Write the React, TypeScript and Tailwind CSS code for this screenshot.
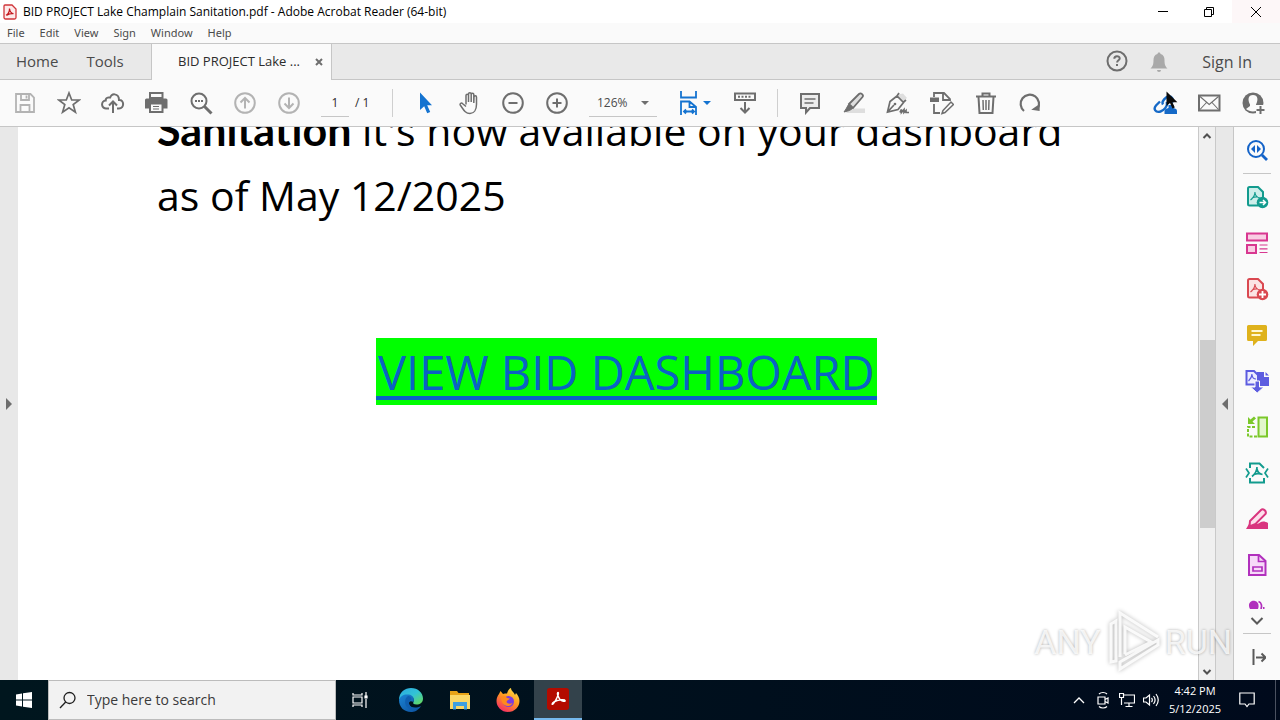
import type { ReactNode } from "react";

interface IconProps {
  children: ReactNode;
  className?: string;
}

const Icon = ({ children, className = "text-[#6e6e6e]" }: IconProps) => (
  <svg viewBox="0 0 24 24" className={`h-6 w-6 shrink-0 ${className}`} fill="none" stroke="currentColor" strokeWidth="2" aria-hidden="true">
    {children}
  </svg>
);

interface ToolButtonProps {
  label: string;
  children: ReactNode;
  className?: string;
}

const ToolButton = ({ label, children, className }: ToolButtonProps) => (
  <button type="button" aria-label={label} className="relative flex h-full w-11 shrink-0 items-center justify-center">
    <Icon className={className}>{children}</Icon>
  </button>
);

const Divider = () => <div className="mx-[10px] h-7 w-px shrink-0 bg-[#cfcfcf]" />;

const AcrobatSwirl = () => (
  <path d="M12 5c-1.600 0 .4 5.500 2.200 7.500 2 2.200 5.800 2.700 5.600 1.200-.4-1.700-8.300-.8-11.800 1.300-3.500 2-2.500 3.800-1.200 2.200C9.500 14.500 13.800 5 12 5z" strokeWidth="1.600" />
);

const PdfPage = ({ fill }: { fill: string }) => (
  <>
    <path d="M13 20.500H4.500a1.500 1.500 0 0 1-1.500-1.500V3.500A1.500 1.500 0 0 1 4.500 2H13l5 5v5" fill={fill} />
    <path d="M10 7c0 3-2 6-4.500 8M10 8c.5 3 2 4.500 5 5M7 13c2-1 4-1.200 6-1" strokeWidth="1.200" />
  </>
);

const menus = ["File", "Edit", "View", "Sign", "Window", "Help"];

const TitleBar = () => (
  <header className="flex h-[23px] shrink-0 items-center bg-white text-xs text-black">
    <svg viewBox="0 0 14 16" className="mr-[6px] ml-[3px] h-4 w-[14px]" fill="none" aria-hidden="true">
      <path d="M2 1h7l4 4v8.500a1.500 1.500 0 0 1-1.500 1.500h-9A1.500 1.500 0 0 1 1 13.500V2a1 1 0 0 1 1-1z" fill="#fdeaea" stroke="#d0353a" strokeWidth="1.300" />
      <path d="M6.500 4.500c0 3-1.500 5.500-3 6.500.5.800 1.500-1.800 7-1.300-1.500-.2-3.500-1.500-4-5.200z" stroke="#c3181e" strokeWidth="1.200" />
    </svg>
    <h1>BID PROJECT Lake Champlain Sanitation.pdf - Adobe Acrobat Reader (64-bit)</h1>
    <div className="ml-auto flex h-full">
      <button type="button" aria-label="Minimize" className="flex w-[46px] items-center justify-center">
        <svg viewBox="0 0 12 12" className="h-3 w-3" stroke="#000"><path d="M1 5.500h10" /></svg>
      </button>
      <button type="button" aria-label="Restore" className="flex w-[46px] items-center justify-center">
        <svg viewBox="0 0 12 12" className="h-3 w-3" stroke="#000" fill="none"><path d="M1.500 3.500h7v7h-7zM3.500 3.500v-2h7v7h-2" /></svg>
      </button>
      <button type="button" aria-label="Close" className="flex w-12 items-center justify-center bg-[#fdf7f8]">
        <svg viewBox="0 0 12 12" className="h-3 w-3" stroke="#000"><path d="M1 1l10 10M11 1L1 11" /></svg>
      </button>
    </div>
  </header>
);

const TabBar = () => (
  <div className="flex h-9 shrink-0 items-stretch border-b border-[#c6c6c6] bg-[#e9e9e9] text-[15px] text-[#4b4b4b]">
    <nav className="flex w-[151px] items-center gap-7 pl-4">
      <button type="button">Home</button>
      <button type="button">Tools</button>
    </nav>
    <div className="-mb-px flex w-[181px] items-center justify-between border-x border-[#c6c6c6] bg-[#fafafa] pr-2 pl-[26px] text-[13px] text-[#2c2c2c]">
      <span>BID PROJECT Lake ...</span>
      <button type="button" aria-label="Close tab">
        <svg viewBox="0 0 8 8" className="h-2 w-2" stroke="#6e6e6e" strokeWidth="2"><path d="M1 1l6 6M7 1L1 7" /></svg>
      </button>
    </div>
    <div className="ml-auto flex items-center pr-7">
      <button type="button" aria-label="Help" className="mr-[17px]">
        <Icon>
          <circle cx="11" cy="11" r="9.500" />
          <path d="M8.300 8.800c0-3.600 5.400-3.300 5.400-.4 0 1.900-2.600 1.900-2.600 4.100M11 14v2" />
        </Icon>
      </button>
      <button type="button" aria-label="Notifications" className="mr-[31px]">
        <Icon className="text-[#a9a9a9]">
          <path d="M12 2.500c1 0 1.500.6 1.500 1.500 3 .8 4 3 4 6 0 4.500.8 6.500 3 8.500h-17c2.200-2 3-4 3-8.500 0-3 1-5.200 4-6 0-.9.500-1.500 1.500-1.500zM10 20h4a2 2 0 0 1-4 0z" fill="currentColor" stroke="none" />
        </Icon>
      </button>
      <button type="button" className="text-base">Sign In</button>
    </div>
  </div>
);

const Toolbar = () => (
  <div className="flex h-[47px] shrink-0 items-center border-b border-[#c6c6c6] bg-[#fafafa] pr-[5px] pl-[3px] text-xs">
    <ToolButton label="Save" className="text-[#b3b3b3]">
      <path d="M3 3h14.500L21 6.500V21H3zM8 3v6h8V3M7.500 21v-7h9v7M13.500 4.500v3" strokeWidth="1.800" />
    </ToolButton>
    <ToolButton label="Add to favorites">
      <path d="M12 2l2.700 7h7.500l-6 4.600 2.200 7.600-6.400-4.500-6.400 4.500 2.200-7.600-6-4.600h7.500z" strokeWidth="1.700" />
    </ToolButton>
    <ToolButton label="Upload">
      <path d="M8 17.500H5.500a4 4 0 0 1-.8-8C4.500 6 9 6 9 7.500 9.500 1.500 18 2 18 9c5.500-.5 5.500 8.500 0 8.500h-2M12 22V10.500M8 14.500l4-4 4 4" />
    </ToolButton>
    <ToolButton label="Print">
      <path d="M5 2h12.500v5H5z" fill="#fafafa" />
      <path d="M1.500 7.500h19.500a1.500 1.500 0 0 1 1.500 1.500v8.500H0V9a1.500 1.500 0 0 1 1.500-1.500z" fill="currentColor" stroke="none" />
      <path d="M5 12.500h12.500V21H5z" fill="#fafafa" />
      <path d="M8 15.500h6M8 18h6" strokeWidth="1.200" />
    </ToolButton>
    <ToolButton label="Find">
      <circle cx="10" cy="10" r="7.500" />
      <path d="M15.500 15.500l7 7" strokeWidth="3" />
      <path d="M6 10h2M9 10h2M12 10h2" />
    </ToolButton>
    <ToolButton label="Previous page" className="text-[#b3b3b3]">
      <circle cx="12" cy="12" r="9.800" />
      <path d="M12 17.500V7M7.500 11.500L12 7l4.500 4.500" />
    </ToolButton>
    <ToolButton label="Next page" className="text-[#b3b3b3]">
      <circle cx="12" cy="12" r="9.800" />
      <path d="M12 6.500V17M7.500 12.500L12 17l4.500-4.500" />
    </ToolButton>
    <div className="ml-[10px] flex items-center gap-[6px] text-[#2c2c2c]">
      <input aria-label="Page number" defaultValue="1" className="h-7 w-7 border-b border-[#c6c6c6] text-center" />
      <span className="w-[17px] whitespace-nowrap">/ 1</span>
    </div>
    <div className="ml-[10px]"><Divider /></div>
    <ToolButton label="Select" className="text-[#1473d0]">
      <path d="M7 1.500v17.500l4.200-3.800 3 7 3-1.300-3-6.700H19z" fill="currentColor" stroke="none" />
    </ToolButton>
    <ToolButton label="Pan">
      <path d="M8 13.500V4.500c0-1.800 2.500-1.800 2.500 0V11V3c0-1.800 2.700-1.800 2.700 0v8-7.500c0-1.800 2.600-1.800 2.600 0V12l.2-6c.2-1.600 2.500-1.500 2.500.2v7c0 5.500-2.500 9.300-6.500 9.300-5 0-6.500-4-9.800-8.500-.8-1.500 1.200-2.600 2.500-1.300L8 15.500" strokeWidth="1.500" transform="translate(1 0)" />
    </ToolButton>
    <ToolButton label="Zoom out">
      <circle cx="12" cy="12" r="9.800" />
      <path d="M7.500 12h9" />
    </ToolButton>
    <ToolButton label="Zoom in">
      <circle cx="12" cy="12" r="9.800" />
      <path d="M7.500 12h9M12 7.500v9" />
    </ToolButton>
    <button type="button" aria-label="Zoom level" className="ml-[10px] flex h-7 w-[68px] shrink-0 items-center justify-between border-b border-[#c6c6c6] px-2 text-[#4b4b4b]">
      126%
      <svg viewBox="0 0 8 4" className="h-1 w-2" fill="#6e6e6e"><path d="M0 0h8L4 4z" /></svg>
    </button>
    <button type="button" aria-label="Fit width" className="ml-5 flex h-full w-[46px] shrink-0 items-center gap-[2px]">
      <Icon className="text-[#1473d0]">
        <path d="M4 0v6.500h15V0M4 24V10.500h8.500L19 16v8M12.500 10.500V16H19M7 20.500h10M9 18.500l-2 2 2 2M15 18.500l2 2-2 2" strokeWidth="1.800" />
      </Icon>
      <svg viewBox="0 0 8 4" className="h-1 w-2" fill="#1473d0"><path d="M0 0h8L4 4z" /></svg>
    </button>
    <ToolButton label="Show keyboard bar">
      <path d="M2 2.500h20v6.500H2z" />
      <path d="M5 5.800h2M8.500 5.800h2M12 5.800h2M15.500 5.800h2M12 11v10.500M7.500 17l4.500 4.500 4.500-4.500" />
    </ToolButton>
    <Divider />
    <ToolButton label="Comment">
      <path d="M3 3h18v14h-9l-4 4.500V17H3z" fill="#ececec" />
      <path d="M6.500 8h11M6.500 12h9" strokeWidth="1.300" />
    </ToolButton>
    <ToolButton label="Highlight">
      <path d="M8 17.500h15V22H4z" fill="#dedede" stroke="none" />
      <path d="M7 13L17 3c2-1.800 5 1 3.500 3L11 17z" fill="#dedede" strokeWidth="1.800" />
      <path d="M6.500 13.500l4 4-3 2L2 21l2-3z" fill="currentColor" strokeWidth="1" />
    </ToolButton>
    <ToolButton label="Sign">
      <path d="M12 3.500l5-1 4 4.500-5 4z" fill="#dedede" stroke="none" />
      <path d="M1.500 21L4 10.500l7-5.500 6.500 6.500-5.500 7zM1.500 21l6.500-7M11 5l2-3M17 11.500L20 9M14 21.500l1.500-3v3l2.500-3v3l2-2v2h3" strokeWidth="1.700" />
      <circle cx="9" cy="13" r="1.300" fill="currentColor" stroke="none" />
    </ToolButton>
    <ToolButton label="Edit PDF">
      <path d="M4 6V2h10l6 6v2M13 2v7h7M4 13v9h6" strokeWidth="1.800" />
      <path d="M0 6.500h9V11H0z" fill="currentColor" stroke="none" />
      <path d="M13 19.500L21 11l2.500 2.500-8.500 8-3 1z" strokeWidth="1.500" fill="#fafafa" />
    </ToolButton>
    <ToolButton label="Delete">
      <path d="M2 5.500h20M8.500 5V2.500h7V5M4.500 6l1 16h13l1-16" />
      <path d="M9 9l.3 10M12 9v10M15 9l-.3 10" strokeWidth="1.500" />
    </ToolButton>
    <ToolButton label="Rotate">
      <path d="M6 20A9.200 9.200 0 1 1 19.500 18" strokeWidth="2.200" />
      <path d="M13.500 19.500h8.500l-1-7z" fill="currentColor" stroke="none" transform="rotate(8 18 17)" />
    </ToolButton>
    <div className="ml-auto flex h-full">
      <button type="button" aria-label="Share link" className="relative flex w-11 items-center justify-center">
        <Icon className="text-[#1569c7]">
          <path d="M10 13.500c-2-3 3-8 6-8s5 3 3 6M13.500 11c2 4-3 8.500-6 9.500-5 1.500-7.500-2.500-4.500-6L7 10.500" strokeWidth="2.400" />
          <path d="M11.500 23v-3c0-2 2-2.500 4-3V14h5v3c2 .5 3.500 1 3.500 3v3z" fill="currentColor" stroke="none" />
        </Icon>
        {/* mouse pointer resting on the button */}
        <svg viewBox="0 0 12 18" className="absolute top-[11px] left-[23px] h-[18px] w-3" aria-hidden="true">
          <path d="M.5.500v14.500l3.500-3 2.500 5.500 2.300-1-2.400-5.300h5z" fill="#0b0b0b" />
        </svg>
      </button>
      <ToolButton label="Send by email">
        <path d="M2 4.500h20.500v15H2z" />
        <path d="M3 5.500l9.200 8 9.300-8M3 18.500l6.500-7M21.500 18.500l-6.500-7" strokeWidth="1.100" />
      </ToolButton>
      <ToolButton label="Share with others">
        <circle cx="12" cy="12" r="10.500" fill="currentColor" stroke="none" />
        <path d="M12 4c5 0 5.500 5 3 9.500v1.500l4.500 2.500C16 21 9 21.500 5 18l4-3v-1.500C6.500 9 7 4 12 4z" fill="#fafafa" stroke="none" />
        <path d="M15 14h9v9h-9z" fill="#fafafa" stroke="none" />
        <path d="M19.500 15v8M15.500 19h8" />
      </ToolButton>
    </div>
  </div>
);

const ScrollBar = () => (
  <div className="flex w-[18px] shrink-0 flex-col items-center border-x border-[#c9c9c9] bg-[#f0f0f0]" aria-hidden="true">
    <svg viewBox="0 0 16 17" className="h-[17px] w-4 shrink-0" fill="none" stroke="#505050" strokeWidth="2"><path d="M4.500 11L8 7.500l3.500 3.500" /></svg>
    <div className="grow-[196]" />
    <div className="w-[15px] grow-[188] bg-[#cdcdcd]" />
    <div className="grow-[135]" />
    <svg viewBox="0 0 16 17" className="h-[17px] w-4 shrink-0" fill="none" stroke="#505050" strokeWidth="2"><path d="M4.500 7L8 10.500 11.500 7" /></svg>
  </div>
);

const DocumentPage = () => (
  <main className="min-w-0 flex-1 overflow-hidden bg-white text-black">
    <p className="-mt-[30px] ml-[139px] text-[41px] leading-[65px] whitespace-nowrap">
      <strong className="font-[Lato,sans-serif] text-[43px]">Sanitation</strong> it's now available on your dashboard
      <br />
      as of May 12/2025
    </p>
    <div className="mt-[110px] ml-[358px] flex">
      <a href="#dashboard" className="h-[67px] bg-[#00ff00] px-[2px] text-[47px] leading-[68px] whitespace-nowrap text-[#0b62c4] shadow-[inset_0_-5px_0_#00ff00,inset_0_-9px_0_#0b62c4]">
        VIEW BID DASHBOARD
      </a>
    </div>
  </main>
);

const sideTools = [
  {
    label: "Export PDF",
    color: "text-[#129b8e]",
    icon: (
      <>
        <PdfPage fill="#cdeeea" />
        <circle cx="17.500" cy="17.500" r="5.800" fill="currentColor" stroke="none" />
        <path d="M14.500 17.500h6M18 15l2.500 2.500L18 20" stroke="#fff" strokeWidth="1.500" />
      </>
    ),
  },
  {
    label: "Organize pages",
    color: "text-[#d83790]",
    icon: (
      <>
        <path d="M2 2.500h20v7H2zM2 14h9v8H2z" fill="#f9cde3" />
        <path d="M14.500 14h8M14.500 17.800h8M14.500 21.500h8" strokeWidth="1.200" />
      </>
    ),
  },
  {
    label: "Create PDF",
    color: "text-[#da4850]",
    icon: (
      <>
        <PdfPage fill="#fbe3e3" />
        <circle cx="17.500" cy="17.500" r="5.800" fill="currentColor" stroke="none" />
        <path d="M14 17.500h7M17.500 14v7" stroke="#fff" strokeWidth="1.800" />
      </>
    ),
  },
  {
    label: "Comment",
    color: "text-[#dfb21c]",
    icon: (
      <>
        <path d="M3.500 2h17A1.500 1.500 0 0 1 22 3.500v13a1.500 1.500 0 0 1-1.500 1.500H13l-5 5v-5H3.500A1.500 1.500 0 0 1 2 16.500v-13A1.500 1.500 0 0 1 3.500 2z" fill="currentColor" stroke="none" />
        <path d="M6.500 8h11M6.500 12h9" stroke="#fff7d0" strokeWidth="1.800" />
      </>
    ),
  },
  {
    label: "Combine files",
    color: "text-[#5c5ce0]",
    icon: (
      <>
        <path d="M12 3h7v5h5v9H12zM20.500 3L24 6.500h-3.500z" fill="currentColor" stroke="none" />
        <path d="M1.500 2H9l4 4v9.500H1.500z" fill="#ededff" />
        <path d="M7 5c0 3-1.500 5-3.500 7M7 6c.5 3 2 4 4 4" strokeWidth="1.200" />
        <path d="M10 12h4.500v6H19L12.200 24 5.500 18H10z" fill="currentColor" stroke="#fafafa" strokeWidth="1" />
      </>
    ),
  },
  {
    label: "Compress pages",
    color: "text-[#7bc82a]",
    icon: (
      <>
        <path d="M13.500 2.500H22v19h-8.500z" fill="#e2f6cc" />
        <path d="M10 12H3v9.500h10" strokeDasharray="3 1.500" />
        <path d="M3 9V2l2.500 2.500L9 1.500l2 2-3.500 3L10 9z" fill="currentColor" stroke="none" />
      </>
    ),
  },
  {
    label: "Compress PDF",
    color: "text-[#129b8e]",
    icon: (
      <>
        <path d="M5 7V2.500h9.500L19 7M5 17v4.500h14V17" />
        <path d="M1 7.500L4 12l-3 4.500M23 7.500L20 12l3 4.500M12 6c0 4-2 7-5 9.500M12 8c.5 3 2.500 5 5.500 5.500M9 13.500c2-1 4-1.300 7-.5" strokeWidth="1.700" />
      </>
    ),
  },
  {
    label: "Redact",
    color: "text-[#d9367f]",
    icon: (
      <>
        <path d="M1 22l3-5c6-1 8 1 11-1.500 2-1.500 5-1.500 8 .5v6z" fill="currentColor" stroke="none" />
        <path d="M5 14L16 3c2-2 6 1 4.500 4L10.500 17l-6 2.500z" fill="#fde0ec" />
      </>
    ),
  },
  {
    label: "Prepare form",
    color: "text-[#b130bd]",
    icon: (
      <>
        <path d="M4 2h10l6.500 6v14H4z" fill="#f6d9f8" />
        <path d="M13.500 2v6.500h7M8 14h9v4H8z" strokeWidth="1.700" />
      </>
    ),
  },
];

const ToolRail = () => (
  <aside className="flex w-[47px] shrink-0 flex-col items-center overflow-hidden border-l border-[#c6c6c6] bg-[#fafafa]">
    <button type="button" aria-label="Search tools" className="flex h-[46px] shrink-0 items-center">
      <Icon className="text-[#1463c8]">
        <circle cx="11" cy="11" r="8" />
        <path d="M17 17l5 5" strokeWidth="2.800" />
        <path d="M10 7v8l-4-4zM12 7v8l4-4z" fill="currentColor" stroke="none" />
      </Icon>
    </button>
    <div className="h-px w-7 shrink-0 bg-[#c6c6c6]" />
    {sideTools.map((tool) => (
      <button key={tool.label} type="button" aria-label={tool.label} className="flex h-[46px] shrink-0 items-center">
        <Icon className={tool.color}>{tool.icon}</Icon>
      </button>
    ))}
    <div className="flex min-h-0 flex-1 items-end overflow-hidden">
      <svg viewBox="0 0 18 9" className="h-[9px] w-[18px]" fill="none" aria-hidden="true">
        <path d="M2 9C-1 4 3 0 7 1c3 .5 4.500 4 3 8z" fill="#b130bd" />
        <path d="M10.500 1.500c3 1 3.500 4.500 2.500 7.500" stroke="#b130bd" strokeWidth="1.800" />
        <path d="M15 8h1.500" stroke="#b130bd" strokeWidth="2" />
      </svg>
    </div>
    <button type="button" aria-label="More tools" className="flex h-6 shrink-0 items-center">
      <svg viewBox="0 0 14 8" className="h-2 w-[14px]" fill="none" stroke="#5a5a5a" strokeWidth="2"><path d="M1.500 1L7 6.500 12.500 1" /></svg>
    </button>
    <div className="h-px w-7 shrink-0 bg-[#c6c6c6]" />
    <button type="button" aria-label="Collapse tools pane" className="flex h-[46px] shrink-0 items-center">
      <svg viewBox="0 0 14 16" className="ml-1 h-4 w-[14px]" fill="none" stroke="#5a5a5a" strokeWidth="2"><path d="M1.500 0v16M4 8.500h9M9.500 4.500l4 4-4 4" /></svg>
    </button>
  </aside>
);

const Watermark = () => (
  <div className="pointer-events-none absolute right-12 bottom-[6px] flex items-center gap-[2px] font-[Roboto,sans-serif] text-[34px] leading-[64px] text-white/80 [text-shadow:0_0_3px_#0005]">
    <span>ANY</span>
    <svg viewBox="0 0 60 64" className="h-16 w-[60px]" fill="none" stroke="#fff" strokeOpacity="0.85" strokeWidth="3" style={{ filter: "drop-shadow(0 0 2px #0005)" }} aria-hidden="true">
      <path d="M8 52V14l5-3v40zM17 47V3l38 24M22 44V17l26 15-26 13M17 52l38-22v5L17 59z" />
    </svg>
    <span>RUN</span>
  </div>
);

const Taskbar = () => (
  <footer className="flex h-10 shrink-0 items-stretch bg-linear-to-r from-[#00161e] to-[#000a1c] text-white">
    <button type="button" aria-label="Start" className="flex w-12 items-center justify-center">
      <svg viewBox="0 0 16 16" className="h-4 w-4" fill="#fff"><path d="M0 2.500l6-1v6H0zM7 1.300L16 0v7.500H7zM0 8.500h6v6l-6-1zM7 8.500h9V16l-9-1.300z" /></svg>
    </button>
    <label className="flex w-72 items-center border border-[#bcbcbc] bg-[#f2f2f2] pl-[10px]">
      <svg viewBox="0 0 18 18" className="mr-[10px] h-[18px] w-[18px]" fill="none" stroke="#1f1f1f" strokeWidth="1.300"><circle cx="10.500" cy="7" r="5.500" /><path d="M6.700 11L1 17" /></svg>
      <input type="text" aria-label="Search" placeholder="Type here to search" className="w-52 text-sm placeholder:text-[#3a3a3a]" />
    </label>
    <button type="button" aria-label="Task view" className="flex w-12 items-center justify-center">
      <svg viewBox="0 0 16 16" className="h-4 w-4" fill="none" stroke="#fff" strokeWidth="1.200"><path d="M1 1v2h9V1M1 15v-2h9v2M1 5h9v6H1zM14 0v4M14 7v9" /><path d="M13 4h2v2h-2z" fill="#fff" /></svg>
    </button>
    <button type="button" aria-label="Edge" className="flex w-[54px] items-center justify-center">
      <svg viewBox="0 0 24 24" className="h-6 w-6">
        <defs>
          <linearGradient id="edgeTop" x1="0" y1="0" x2="1" y2="1"><stop offset="0" stopColor="#2ba8e0" /><stop offset="0.500" stopColor="#32c3d6" /><stop offset="1" stopColor="#6bdc50" /></linearGradient>
          <linearGradient id="edgeBottom" x1="0" y1="0" x2="1" y2="1"><stop offset="0" stopColor="#1b84d4" /><stop offset="1" stopColor="#0c4f9c" /></linearGradient>
        </defs>
        <path d="M0 12C0 4 6 0 12 0c7 0 12 5 12 10.500 0 4-3 6-6.500 6-3 0-4-1-3-2.500 1.500-2.500-1-6-5-6C5 8 1 10 0 12z" fill="url(#edgeTop)" />
        <path d="M0 12c1-4 5-6 9.500-5.500C14 7 16 11 14.500 14 11 12 9.500 14 10 16c1 3.500 6.500 5 12 2-3 5-7 6-10 6C5 24 0 19 0 12z" fill="url(#edgeBottom)" />
        <path d="M9 8c-3 2-4 7-1 11 3 3.500 8 3 11 1-5 1-9-1-9-5 0-2 1-3 2.500-3.500C12.500 9.500 11 8 9 8z" fill="#0f5fb0" />
      </svg>
    </button>
    <button type="button" aria-label="File Explorer" className="flex w-11 items-center justify-center">
      <svg viewBox="0 0 22 20" className="h-5 w-[22px]"><path d="M1 1h7l1.500 2H20v3H1z" fill="#e8a317" /><path d="M1 5h20v14H1z" fill="#fbd766" /><path d="M4 12h14v7.500h-3V16H7v3.500H4z" fill="#3f9fe0" /></svg>
    </button>
    <button type="button" aria-label="Firefox" className="flex w-[52px] items-center justify-center">
      <svg viewBox="0 0 24 24" className="h-6 w-6">
        <defs>
          <linearGradient id="fox" x1="0.800" y1="0" x2="0.200" y2="1"><stop offset="0" stopColor="#ffe14a" /><stop offset="0.450" stopColor="#ff9a1f" /><stop offset="1" stopColor="#f5226a" /></linearGradient>
        </defs>
        <path d="M3 6l1.500-3L7 6c1-.5 3-.5 4-.5C12 2 14 0 15 0c0 3 3 4 4 7l1-2c2 2 3.500 5 3.500 8C23.500 19 18.500 24 12 24S.5 19 .5 13C.5 10 1.500 8 3 6z" fill="url(#fox)" />
        <circle cx="12.500" cy="13.500" r="5.500" fill="#7a3be0" />
        <path d="M5 9c2-1 5-1 6 1l3 .5c-1 1.500-3 1.500-3.500 3.500 1 2 4 2 6 1-1 3-5 4-8 2-2.500-1.800-3.500-5-3.500-8z" fill="#ff8a1c" />
      </svg>
    </button>
    <button type="button" aria-label="Adobe Acrobat" className="flex w-12 items-center justify-center border-b-2 border-[#76b9ed] bg-[#33424b]">
      <svg viewBox="0 0 24 24" className="h-[22px] w-[22px]" fill="none" stroke="#fff"><rect width="24" height="24" rx="3" fill="#b30b00" stroke="none" /><AcrobatSwirl /></svg>
    </button>
    <div className="ml-auto flex items-center">
      <div className="flex items-center">
        <button type="button" aria-label="Hidden icons" className="flex w-6 justify-center">
          <svg viewBox="0 0 12 12" className="h-3 w-3" fill="none" stroke="#fff" strokeWidth="1.300"><path d="M1 9l5-5 5 5" /></svg>
        </button>
        <button type="button" aria-label="Meet now" className="flex w-6 justify-center">
          <svg viewBox="0 0 16 18" className="h-[18px] w-4" fill="none" stroke="#fff" strokeWidth="1.200"><path d="M3 6h7v7H3zM10 8.500L13 7v5l-3-1.500M4 3c2-2 6-2 8 0M4 15.500c2 2 6 2 8 0" /></svg>
        </button>
        <button type="button" aria-label="Network" className="flex w-6 justify-center">
          <svg viewBox="0 0 16 16" className="h-4 w-4" fill="none" stroke="#fff" strokeWidth="1.200"><path d="M5 3h10.500v8H5M10 11v3M6.500 14.500h7M.5 1.500h4v4h-4zM2.500 5.500V13" /></svg>
        </button>
        <button type="button" aria-label="Volume" className="flex w-6 justify-center">
          <svg viewBox="0 0 16 16" className="h-4 w-4" fill="none" stroke="#fff" strokeWidth="1.200"><path d="M.5 6v4h2.500L6.500 13V3L3 6zM8.500 6c1 1.200 1 2.800 0 4M10.500 4c2 2.500 2 5.500 0 8M13 2c3 4 3 8 0 12" /></svg>
        </button>
      </div>
      <div className="w-16 text-center text-[11px] leading-[18px]">
        <p>4:42 PM</p>
        <p>5/12/2025</p>
      </div>
      <button type="button" aria-label="Action center" className="flex w-10 justify-center">
        <svg viewBox="0 0 16 16" className="h-4 w-4" fill="none" stroke="#fff" strokeWidth="1.200"><path d="M.8 1h14.400v11H10l-2 2.500L6 12H.8z" /></svg>
      </button>
      <div className="mr-1 ml-2 h-full w-px bg-[#4a5160]" />
    </div>
  </footer>
);

export default function App() {
  return (
    <div className="flex h-screen flex-col overflow-hidden bg-[#fafafa] font-['Open_Sans','Noto_Sans',sans-serif]">
      <TitleBar />
      <nav className="flex h-[21px] shrink-0 items-center gap-[15px] border-b border-[#c6c6c6] bg-[#fafafa] pl-[7px] font-['Noto_Sans',sans-serif] text-[11px] text-[#4b4b4b]">
        {menus.map((menu) => (
          <button key={menu} type="button">{menu}</button>
        ))}
      </nav>
      <TabBar />
      <Toolbar />
      <div className="relative flex min-h-0 flex-1">
        <button type="button" aria-label="Open navigation pane" className="flex w-[18px] shrink-0 items-center justify-center bg-[#e8e8e8]">
          <svg viewBox="0 0 6 12" className="h-3 w-[6px]" fill="#6e6e6e"><path d="M0 0l6 6-6 6z" /></svg>
        </button>
        <DocumentPage />
        <ScrollBar />
        <button type="button" aria-label="Close tools pane" className="flex w-[17px] shrink-0 items-center justify-center bg-[#e8e8e8]">
          <svg viewBox="0 0 6 12" className="h-3 w-[6px]" fill="#6e6e6e"><path d="M6 0L0 6l6 6z" /></svg>
        </button>
        <ToolRail />
        <Watermark />
      </div>
      <Taskbar />
    </div>
  );
}
